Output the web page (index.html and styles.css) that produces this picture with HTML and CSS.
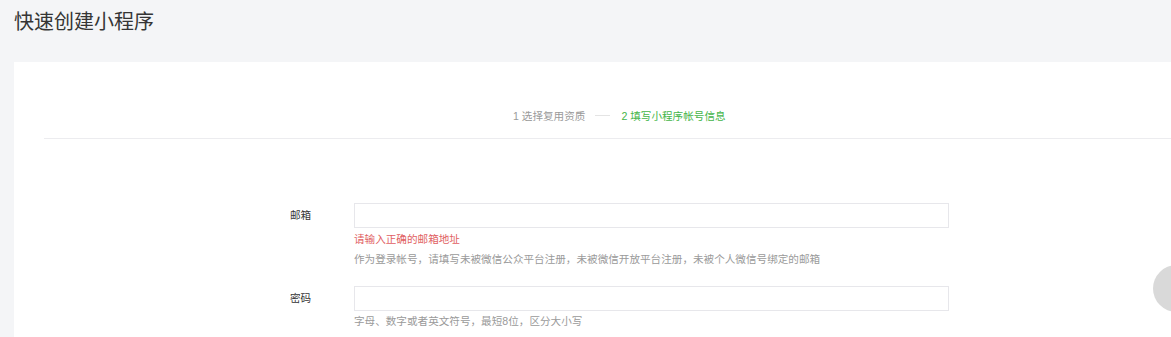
FILE: index.html
```html
<!DOCTYPE html>
<html lang="zh-CN">
<head>
    <meta charset="UTF-8">
    <meta name="viewport" content="width=device-width, initial-scale=1.0">
    <title>快速创建小程序</title>
    <link rel="stylesheet" href="styles.css">
</head>
<body>
    <div class="header">
        <h1>快速创建小程序</h1>
    </div>

    <div class="card">
        <div class="steps">
            <span class="step">1 选择复用资质</span>
            <span class="step-line"></span>
            <span class="step current">2 填写小程序帐号信息</span>
        </div>

        <div class="form">
            <div class="row">
                <label class="label">邮箱</label>
                <div class="field">
                    <input type="text" class="input">
                    <p class="msg-error">请输入正确的邮箱地址</p>
                    <p class="tips">作为登录帐号，请填写未被微信公众平台注册，未被微信开放平台注册，未被个人微信号绑定的邮箱</p>
                </div>
            </div>
            <div class="row">
                <label class="label">密码</label>
                <div class="field">
                    <input type="password" class="input">
                    <p class="tips">字母、数字或者英文符号，最短8位，区分大小写</p>
                </div>
            </div>
        </div>
    </div>

    <div class="float-btn"></div>
</body>
</html>
```

FILE: styles.css
```css
body {
    margin: 0;
    background: #f4f5f7;
    font-family: "Liberation Sans", "Noto Sans CJK SC", sans-serif;
    font-size: 10.6px;
    color: #353535;
    overflow: hidden;
}
.header {
    height: 62px;
    padding: 10px 14px 0;
    box-sizing: border-box;
}
.header h1 {
    margin: 0;
    font-size: 20px;
    font-weight: normal;
    line-height: 24px;
    color: #353535;
}
.card {
    margin-left: 14px;
    background: #fff;
    min-height: 300px;
    padding-top: 41px;
}
.steps {
    display: flex;
    align-items: center;
    height: 24px;
    padding-left: 469px;
    padding-bottom: 11px;
    margin-left: 30px;
    border-bottom: 1px solid #ececef;
}
.steps .step {
    color: #9a9a9a;
}
.steps .step.current {
    color: #44b549;
}
.step-line {
    width: 15px;
    height: 1px;
    background: #e4e4e4;
    margin: 0 11px 0 10px;
}
.form {
    padding-top: 64px;
    padding-left: 276px;
}
.row {
    display: flex;
    margin-bottom: 17px;
}
.label {
    width: 64px;
    line-height: 25px;
}
.field p {
    margin: 0;
    line-height: 20px;
}
.input {
    display: block;
    width: 595px;
    height: 25px;
    box-sizing: border-box;
    border: 1px solid #e7e7eb;
    padding: 0 8px;
    margin: 0;
    outline: none;
}
.msg-error {
    margin-top: 1px !important;
    color: #e15f63;
}
.tips {
    color: #9a9a9a;
}
.float-btn {
    position: fixed;
    left: 1153px;
    top: 265px;
    width: 47px;
    height: 47px;
    border-radius: 50%;
    background: #d9d9d9;
}
```
